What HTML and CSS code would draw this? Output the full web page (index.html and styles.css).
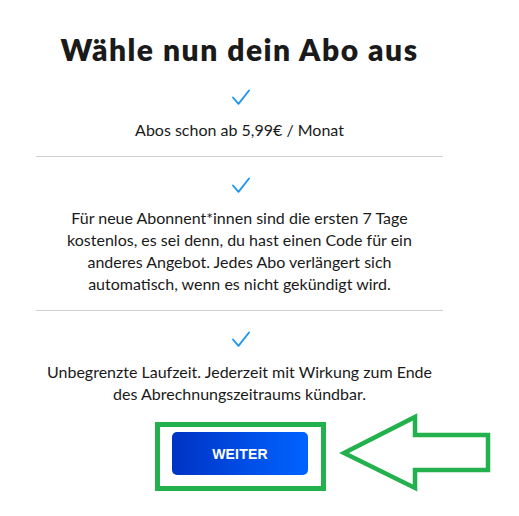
FILE: index.html
```html
<!DOCTYPE html>
<html lang="de">
<head>
<meta charset="utf-8">
<title>Wähle nun dein Abo aus</title>
<link rel="stylesheet" href="styles.css">
</head>
<body>
<main class="plan">
  <h1 class="plan-title">Wähle nun dein Abo aus</h1>
  <ul class="features">
    <li class="feature">
      <svg class="check" viewBox="0 0 18 16" width="18" height="16"><path d="M1 8.5 L6.5 14.8 L17 1.5"/></svg>
      <p class="feature-text">Abos schon ab 5,99€ / Monat</p>
    </li>
    <li class="feature">
      <svg class="check" viewBox="0 0 18 16" width="18" height="16"><path d="M1 8.5 L6.5 14.8 L17 1.5"/></svg>
      <p class="feature-text">Für neue Abonnent*innen sind die ersten 7 Tage<br>kostenlos, es sei denn, du hast einen Code für ein<br>anderes Angebot. Jedes Abo verlängert sich<br>automatisch, wenn es nicht gekündigt wird.</p>
    </li>
    <li class="feature">
      <svg class="check" viewBox="0 0 18 16" width="18" height="16"><path d="M1 8.5 L6.5 14.8 L17 1.5"/></svg>
      <p class="feature-text">Unbegrenzte Laufzeit. Jederzeit mit Wirkung zum Ende<br>des Abrechnungszeitraums kündbar.</p>
    </li>
  </ul>
  <div class="cta-frame">
    <button class="cta" type="button">WEITER</button>
  </div>
</main>
<svg class="pointer-arrow" viewBox="0 0 160 84" width="160" height="84">
  <path d="M5 41 L76 5 L76 23 L149 23 L149 58 L76 58 L76 76 Z"/>
</svg>
</body>
</html>
```

FILE: styles.css
```css
html, body {
  margin: 0;
  padding: 0;
  background: #ffffff;
}

body {
  position: relative;
  width: 519px;
  height: 516px;
  overflow: hidden;
  font-family: Lato, "Noto Sans", "Liberation Sans", sans-serif;
  color: #1a1a1a;
}

.plan {
  width: 407px;
  margin-left: 36px;
  padding-top: 31px;
}

.plan-title {
  margin: 0;
  font-size: 30px;
  line-height: 36px;
  font-weight: 800;
  letter-spacing: 1.5px;
  text-align: center;
  color: #1a1a1a;
}

.features {
  list-style: none;
  margin: 0;
  padding: 0;
}

.feature {
  display: flex;
  flex-direction: column;
  align-items: center;
  gap: 14px;
  padding: 20px 0 15px;
  border-bottom: 1px solid #cfcfcf;
}

.feature:first-child {
  padding-top: 22px;
}

.feature:last-child {
  border-bottom: none;
  padding-bottom: 17px;
}

.check {
  display: block;
  margin-left: 3px;
}

.check path {
  fill: none;
  stroke: #1f97f2;
  stroke-width: 1.9;
  stroke-linecap: round;
  stroke-linejoin: round;
}

.feature-text {
  margin: 0;
  font-size: 16px;
  line-height: 22px;
  text-align: center;
  white-space: nowrap;
}

.cta-frame {
  width: 136px;
  margin: 0 auto;
  padding: 5px 13px 11px 12px;
  border: 5px solid #22b14c;
  position: relative;
  left: 1px;
}

.cta {
  display: block;
  width: 136px;
  height: 43px;
  border: none;
  border-radius: 5px;
  background: linear-gradient(90deg, #0033c4 0%, #004ee6 55%, #0063ff 100%);
  color: #ffffff;
  font-family: "Liberation Sans", Arial, sans-serif;
  font-weight: 700;
  font-size: 14px;
  letter-spacing: 0.2px;
  cursor: pointer;
}

.pointer-arrow {
  position: absolute;
  left: 339px;
  top: 412px;
}

.pointer-arrow path {
  fill: none;
  stroke: #22b14c;
  stroke-width: 4.5;
  stroke-linejoin: miter;
}
```
